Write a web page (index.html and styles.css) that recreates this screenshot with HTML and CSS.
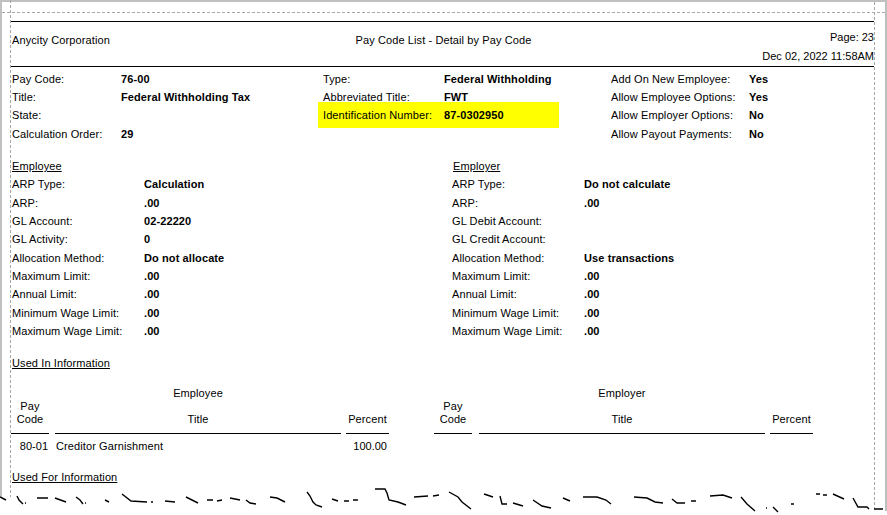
FILE: index.html
```html
<!DOCTYPE html>
<html lang="en">
<head>
<meta charset="utf-8">
<title>Pay Code List - Detail by Pay Code</title>
<link rel="stylesheet" href="styles.css">
</head>
<body>
<div class="page">
  <header class="report-head">
    <div>Anycity Corporation</div>
    <div class="head-title">Pay Code List - Detail by Pay Code</div>
    <div class="head-meta">
      <div>Page: 23</div>
      <div>Dec 02, 2022 11:58AM</div>
    </div>
  </header>

  <section class="info">
    <div>Pay Code:</div><b>76-00</b>
    <div>Type:</div><b>Federal Withholding</b>
    <div>Add On New Employee:</div><b>Yes</b>

    <div>Title:</div><b>Federal Withholding Tax</b>
    <div>Abbreviated Title:</div><b>FWT</b>
    <div>Allow Employee Options:</div><b>Yes</b>

    <div>State:</div><b></b>
    <div class="highlight"><div>Identification Number:</div><b>87-0302950</b></div>
    <div>Allow Employer Options:</div><b>No</b>

    <div>Calculation Order:</div><b>29</b>
    <div></div><b></b>
    <div>Allow Payout Payments:</div><b>No</b>
  </section>

  <section class="limits">
    <div class="limit-col">
      <div class="heading">Employee</div>
      <div>ARP Type:</div><b>Calculation</b>
      <div>ARP:</div><b>.00</b>
      <div>GL Account:</div><b>02-22220</b>
      <div>GL Activity:</div><b>0</b>
      <div>Allocation Method:</div><b>Do not allocate</b>
      <div>Maximum Limit:</div><b>.00</b>
      <div>Annual Limit:</div><b>.00</b>
      <div>Minimum Wage Limit:</div><b>.00</b>
      <div>Maximum Wage Limit:</div><b>.00</b>
    </div>
    <div class="limit-col">
      <div class="heading">Employer</div>
      <div>ARP Type:</div><b>Do not calculate</b>
      <div>ARP:</div><b>.00</b>
      <div>GL Debit Account:</div><b></b>
      <div>GL Credit Account:</div><b></b>
      <div>Allocation Method:</div><b>Use transactions</b>
      <div>Maximum Limit:</div><b>.00</b>
      <div>Annual Limit:</div><b>.00</b>
      <div>Minimum Wage Limit:</div><b>.00</b>
      <div>Maximum Wage Limit:</div><b>.00</b>
    </div>
  </section>

  <div class="section-title">Used In Information</div>

  <section class="used">
    <div class="used-group">
      <div class="group-name">Employee</div>
      <div class="th th-pay">Pay<br>Code</div>
      <div class="th th-title">Title</div>
      <div class="th">Percent</div>
      <div class="td td-code">80-01</div>
      <div class="td td-title">Creditor Garnishment</div>
      <div class="td td-pct">100.00</div>
    </div>
    <div class="used-group used-employer">
      <div class="group-name">Employer</div>
      <div class="th th-pay">Pay<br>Code</div>
      <div class="th th-title">Title</div>
      <div class="th">Percent</div>
    </div>
  </section>

  <div class="section-title section-for">Used For Information</div>

  <svg class="frame" width="887" height="515" viewBox="0 0 887 515" aria-hidden="true">
    <path class="band" d="M0 0H887V2H887V511H885V2H2V497H0Z"/>
    <path class="guide" d="M2 12.5H885M10.5 0V497M874.5 2V510"/>
    <path class="tear" d="M0 497L6 500M17 496L19 500L23 504M25 503H26M37 498H48M55 498L66 502M76 497L80 500L83 504M85 503H86M105 500L109 502M122 494L131 501L147 502M151 502H153M165 501L175 502M186 497L198 503M207 500H213M217 501L222 500M230 498L240 500M246 500L250 503L256 504M270 497L277 498L285 502M307 492L310 496L313 502L316 505L322 507M332 499L338 501M344 501H349M353 500H358M375 489H385L387 493L389 500L398 502L406 505M414 497L428 496M433 496L439 495M449 492L458 497L462 502L471 509M484 494L493 497M500 496L502 504H507M513 503L523 506M533 500L542 506L551 508M563 498L570 501M583 497H597L606 500L611 504M634 497L647 498L655 502L663 503M672 499L677 503L685 503M691 501H696M710 496L723 495L732 498M741 497L747 504L755 511M766 508H767M773 507L778 512M791 504H794M816 494H820M823 495H827M833 494L844 499M853 498L858 507H867L869 509M874 509H883"/>
  </svg>
</div>
</body>
</html>
```
FILE: styles.css
```css
* { box-sizing: border-box; }
html, body { margin: 0; padding: 0; background: #fff; }
b { font-weight: 700; }

.page {
  position: relative;
  width: 887px;
  height: 515px;
  overflow: hidden;
  padding: 21px 13px 0 11px;
  font: 11px/18.33px "Liberation Sans", Arial, sans-serif;
  letter-spacing: 0.1px;
  color: #000;
}

.report-head {
  display: grid;
  grid-template-columns: 1fr auto 1fr;
  height: 46px;
  padding: 9px 0 0 1px;
  border-top: 1px solid #000;
  border-bottom: 1px solid #000;
}
.head-title { padding-left: 1px; }
.head-meta {
  margin-top: -3px;
  text-align: right;
  line-height: 19px;
  letter-spacing: 0;
}

.info {
  display: grid;
  grid-template-columns: 109px 202px 121px 167px 138px 1fr;
  grid-auto-rows: 18.33px;
  margin: 2.7px 0 0 1px;
}
.highlight {
  grid-column: span 2;
  display: grid;
  grid-template-columns: 121px 115px;
  align-items: center;
  margin: -4px 52px -3px -5px;
  padding-left: 5px;
  background: #ff0;
}

.limits {
  display: flex;
  margin: 14px 0 0 1px;
}
.limit-col {
  flex: 0 0 440px;
  display: grid;
  grid-template-columns: 132px 1fr;
  grid-auto-rows: 18.33px;
}
.heading {
  grid-column: 1 / -1;
  text-decoration: underline;
}
.limit-col + .limit-col .heading { padding-left: 1px; }

.section-title {
  margin: 14px 0 0 1px;
  text-decoration: underline;
}

.used {
  display: flex;
  gap: 45px;
  margin-top: 11px;
}
.used-group {
  display: grid;
  grid-template-columns: 39px 286px 43px;
  column-gap: 5px;
  flex: 0 0 378px;
  align-content: start;
  height: 84px;
}
.used-employer { grid-template-columns: 40px 286px 43px; flex-basis: 379px; }
.th-pay { margin-right: 1px; }
.used-employer .th-pay { margin-right: 2px; }
.group-name {
  grid-column: 2;
  grid-row: 1;
  text-align: center;
  line-height: 18px;
  height: 16px;
}
.th {
  grid-row: 2;
  display: flex;
  align-items: flex-end;
  justify-content: center;
  text-align: center;
  line-height: 13px;
  height: 34px;
  padding-bottom: 7px;
  border-bottom: 1px solid #000;
}
.td { grid-row: 3; padding-top: 3px; }
.td-code { padding-right: 2px; text-align: right; letter-spacing: 0; }
.td-title { padding-left: 1px; }
.td-pct { padding-right: 2px; text-align: right; letter-spacing: 0; }

.section-for { margin-top: 0; }

.frame {
  position: absolute;
  inset: 0;
  pointer-events: none;
}
.band { fill: #c0c0c0; }
.guide { fill: none; stroke: #a8a8a8; stroke-width: 1; stroke-dasharray: 3 2; }
.tear { fill: none; stroke: #000; stroke-width: 1.4; }
```
